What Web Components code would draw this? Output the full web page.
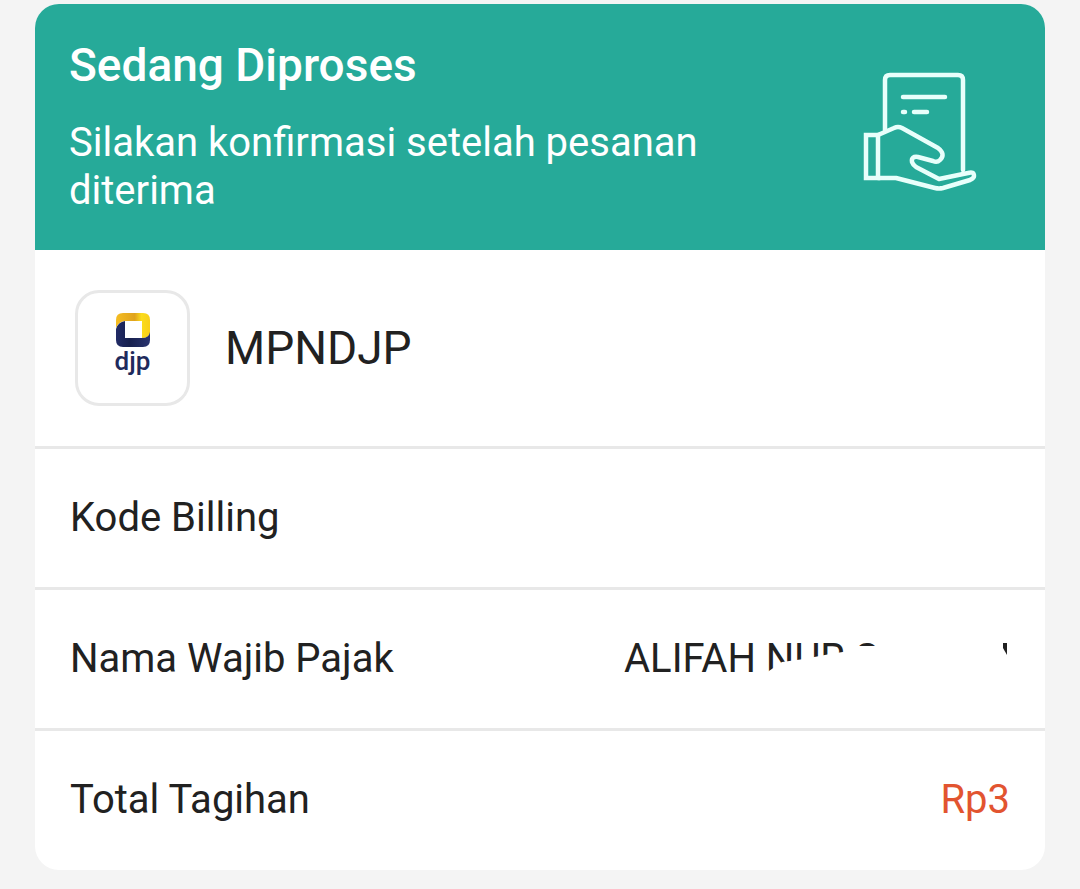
<!DOCTYPE html>
<html lang="id">
<head>
<meta charset="utf-8">
<meta name="viewport" content="width=device-width, initial-scale=1">
<title>Sedang Diproses</title>
<style>
  body {
    margin: 0;
    padding: 4px 35px 18px;
    background: #f4f4f4;
    color: #212121;
    font-family: Roboto, "Liberation Sans", sans-serif;
    font-size: 40px;
    line-height: 48px;
    --color-status: #26aa99;
    --color-line: #e8e8e8;
    --color-price: #e25430;
  }
</style>
</head>
<body>
<order-card>
  <order-status slot="status" heading="Sedang Diproses">Silakan konfirmasi setelah pesanan diterima</order-status>
  <merchant-row>MPNDJP</merchant-row>
  <detail-row label="Kode Billing"></detail-row>
  <detail-row label="Nama Wajib Pajak"><masked-name>ALIFAH NUR S</masked-name></detail-row>
  <detail-row label="Total Tagihan" highlight>Rp3</detail-row>
</order-card>

<script>
class OrderCard extends HTMLElement {
  constructor() {
    super();
    this.attachShadow({ mode: "open" });
    this.shadowRoot.innerHTML = `
      <style>
        :host {
          display: block;
          padding-bottom: 1px;
          background: #fff;
          border-radius: 24px;
          overflow: hidden;
        }
      </style>
      <slot name="status"></slot>
      <slot></slot>
    `;
  }
}

class OrderStatus extends HTMLElement {
  constructor() {
    super();
    this.attachShadow({ mode: "open" });
  }

  connectedCallback() {
    this.shadowRoot.innerHTML = `
      <style>
        :host {
          display: flex;
          align-items: center;
          justify-content: space-between;
          gap: 35px;
          padding: 33px 62px 35px 34px;
          background: var(--color-status);
          color: #fff;
        }
        .text {
          max-width: 680px;
        }
        h1 {
          margin: 0 0 26px;
          font-size: 46px;
          font-weight: 500;
          line-height: 56px;
        }
        p {
          margin: 0;
        }
        svg {
          flex: none;
          width: 124px;
          height: 124px;
          overflow: visible;
        }
      </style>
      <div class="text">
        <h1>${this.getAttribute("heading")}</h1>
        <p><slot></slot></p>
      </div>
      <svg viewBox="0 -2 124 124" fill="none" stroke="#e8fffb" stroke-width="4.5" stroke-linecap="round" stroke-linejoin="round" aria-hidden="true">
        <path d="M26 64V14Q26 9 31 9H99Q104 9 104 14V104"/>
        <path d="M44 31H86M44 46H46M55 46H68"/>
        <path d="M7 69H19V112H7Z" stroke-linejoin="miter"/>
        <path d="M19 69L35 62Q39 60 43 62L79 82Q87 88 81 94Q78 97 74 95L59 91Q52 90 53 96Q54 99 57 101L80 113L109 107Q115 105 115 110Q115 112 111 114L84 122Q80 123 76 122L37 112H19"/>
      </svg>
    `;
  }
}

class MerchantRow extends HTMLElement {
  constructor() {
    super();
    this.attachShadow({ mode: "open" });
    this.shadowRoot.innerHTML = `
      <style>
        :host {
          display: flex;
          align-items: center;
          gap: 35px;
          padding: 40px;
          font-size: 46px;
        }
        .logo {
          display: flex;
          flex-direction: column;
          align-items: center;
          box-sizing: border-box;
          width: 115px;
          height: 116px;
          padding-top: 20px;
          border: 3px solid var(--color-line);
          border-radius: 24px;
        }
        .logo svg {
          width: 34px;
          height: 34px;
        }
        .logo span {
          color: #1f2a5c;
          font-size: 26px;
          font-weight: 500;
          line-height: 28px;
        }
      </style>
      <div class="logo">
        <svg viewBox="0 0 34 34" aria-hidden="true">
          <defs>
            <linearGradient id="gold"><stop offset="0" stop-color="#f5bd22"/><stop offset=".55" stop-color="#e0a31d"/><stop offset=".75" stop-color="#fbdc1c"/><stop offset="1" stop-color="#f8cf1a"/></linearGradient>
            <linearGradient id="navy"><stop offset="0" stop-color="#222b66"/><stop offset=".4" stop-color="#17204e"/><stop offset="1" stop-color="#29346f"/></linearGradient>
          </defs>
          <path fill="url(#gold)" d="M0 15V7Q0 0 7 0H27Q34 0 34 7V20Q33 25 26 25V8H9Q2 9 0 15Z"/>
          <path fill="url(#navy)" d="M0 16Q2 9 9 8V25H26Q33 25 34 19V27Q34 34 27 34H7Q0 34 0 27Z"/>
        </svg>
        <span>djp</span>
      </div>
      <slot></slot>
    `;
  }
}

class DetailRow extends HTMLElement {
  constructor() {
    super();
    this.attachShadow({ mode: "open" });
  }

  connectedCallback() {
    this.shadowRoot.innerHTML = `
      <style>
        :host {
          display: flex;
          justify-content: space-between;
          gap: 24px;
          padding: 45px 35px;
          border-top: 3px solid var(--color-line);
        }
        :host([highlight]) .value {
          color: var(--color-price);
        }
      </style>
      <span>${this.getAttribute("label")}</span>
      <span class="value"><slot></slot></span>
    `;
  }
}

// Name with its lower and trailing part brushed over in white
class MaskedName extends HTMLElement {
  constructor() {
    super();
    this.attachShadow({ mode: "open" });
    this.shadowRoot.innerHTML = `
      <style>
        :host {
          display: block;
          position: relative;
          width: 386px;
          white-space: nowrap;
        }
        svg {
          position: absolute;
          inset: 0;
          width: 386px;
          height: 48px;
        }
      </style>
      <slot></slot>
      <svg viewBox="0 0 386 48" aria-hidden="true">
        <path fill="#fff" d="M142 48V38L158 27L180 24L206 19L225 16L231 11H258V0H386V48Z"/>
        <path fill="#212121" d="M379 8H383V20L379 13Z"/>
      </svg>
    `;
  }
}

customElements.define("order-card", OrderCard);
customElements.define("order-status", OrderStatus);
customElements.define("merchant-row", MerchantRow);
customElements.define("detail-row", DetailRow);
customElements.define("masked-name", MaskedName);
</script>
</body>
</html>
